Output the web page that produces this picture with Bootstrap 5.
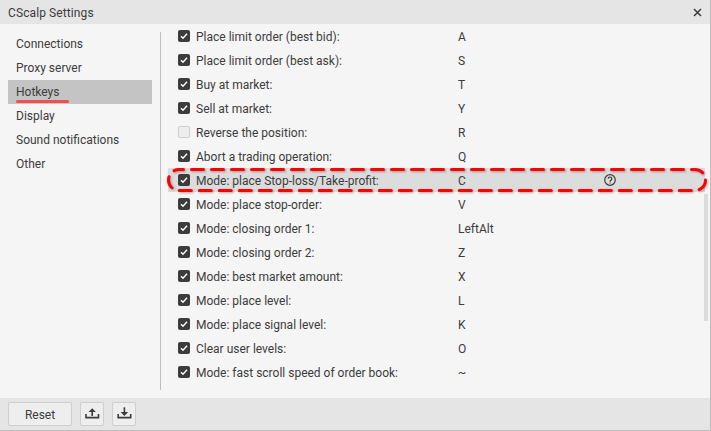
<!DOCTYPE html>
<html lang="en">
<head>
    <meta charset="UTF-8">
    <meta name="viewport" content="width=device-width, initial-scale=1.0">
    <title>CScalp Settings</title>
    <link href="https://cdn.jsdelivr.net/npm/bootstrap@5.3.0/dist/css/bootstrap.min.css" rel="stylesheet">
    <style>
        html, body { height: 100%; overflow: hidden; }
        body { background: #f5f5f5; color: #3c3c3c; font-family: Roboto, "Liberation Sans", sans-serif; font-size: 12px; }
        .settings-window { position: relative; width: 711px; height: 431px; border-right: 1px solid #bdbdbd; border-bottom: 1px solid #bdbdbd; }
        .title-bar { height: 24px; background: #e5e5e5; padding: 1px 8px 0; font-size: 12px; letter-spacing: .1px; }
        .close-btn { width: 9px; height: 9px; display: block; color: #3c3c3c; }
        .settings-body { height: 374px; }
        .side-menu { width: 160px; padding: 8px 8px 0; }
        .side-item { height: 24px; padding-left: 8px; line-height: 24px; position: relative; }
        .side-item.is-active { background: #c4c4c4; }
        .side-underline { position: absolute; left: 8px; top: 19.500px; width: 53px; height: 3.500px; border-radius: 2px; background: #f05050; }
        .hotkeys-pane { border-left: 1px solid #bdbdbd; margin: 8px 0; position: relative; }
        .hotkey-list { margin-top: -8px; padding-left: 7px; }
        .hotkey-row { height: 24px; padding-left: 10px; }
        .hotkey-row.is-marked { background: #dcdcdc; margin-right: 5px; }
        .hotkey-check { width: 12px; height: 12px; border-radius: 2px; background: #3c3c3c; margin-right: 6px; flex: none; display: flex; align-items: center; justify-content: center; }
        .hotkey-check.is-off { background: #eeeeee; border: 1px solid #cfcfcf; }
        .hotkey-check svg { width: 8px; height: 8px; }
        .hotkey-name { width: 262px; padding-top: 2px; }
        .hotkey-key { width: 146px; padding-top: 2px; }
        .help-icon { width: 12px; height: 12px; display: block; }
        .scroll-thumb { position: absolute; left: 543px; top: 162px; width: 4px; height: 127px; background: #dcdcdc; }
        .footer-bar { height: 32px; background: #e5e5e5; padding: 0 8px; gap: 8px; }
        .footer-btn { height: 24px; border: 1px solid #cfcfcf; border-radius: 2px; background: #eeeeee; color: #3c3c3c; font-size: 12px; padding: 0; }
        .footer-btn.is-wide { width: 64px; padding-top: 1px; }
        .footer-btn.is-icon { width: 24px; }
        .footer-btn svg { width: 16px; height: 16px; }
        .mark-oval { position: absolute; left: 165px; top: 167px; width: 544px; height: 26px; filter: drop-shadow(1px 1px 1px rgba(0, 0, 0, .3)); }
    </style>
</head>
<body>

    <div class="settings-window d-flex flex-column">
        <div class="title-bar d-flex align-items-center justify-content-between">
            <span>CScalp Settings</span>
            <svg class="close-btn" viewBox="0 0 9 9"><path d="M1 1l7 7M8 1L1 8" stroke="currentColor" stroke-width="1.5" fill="none"/></svg>
        </div>

        <div class="settings-body d-flex">
            <div class="side-menu flex-shrink-0">
                <div class="side-item">Connections</div>
                <div class="side-item">Proxy server</div>
                <div class="side-item is-active">Hotkeys<span class="side-underline"></span></div>
                <div class="side-item">Display</div>
                <div class="side-item">Sound notifications</div>
                <div class="side-item">Other</div>
            </div>

            <div class="hotkeys-pane flex-grow-1">
                <div class="hotkey-list" id="hotkeyList"></div>
                <div class="scroll-thumb"></div>
            </div>
        </div>

        <div class="footer-bar d-flex align-items-center">
            <button type="button" class="btn footer-btn is-wide">Reset</button>
            <button type="button" class="btn footer-btn is-icon d-flex align-items-center justify-content-center">
                <svg viewBox="0 0 16 16" fill="none" stroke="#3c3c3c" stroke-width="1.600"><path d="M8.200 10V5"/><path d="M8.200 2.200L4.600 6h7.200z" fill="#3c3c3c" stroke="none"/><path d="M2 8v3.600h12.500V8"/></svg>
            </button>
            <button type="button" class="btn footer-btn is-icon d-flex align-items-center justify-content-center">
                <svg viewBox="0 0 16 16" fill="none" stroke="#3c3c3c" stroke-width="1.600"><path d="M8.400 1.300V7"/><path d="M8.400 10L4.600 6h7.600z" fill="#3c3c3c" stroke="none"/><path d="M2.200 8v3.600h12.500V8"/></svg>
            </button>
        </div>

        <svg class="mark-oval" viewBox="0 0 544 26" fill="none">
            <rect x="3.500" y="2.500" width="537" height="21" rx="10.500" stroke="#ff0000" stroke-width="3" stroke-dasharray="12 8" stroke-dashoffset="7.500" stroke-linecap="round"/>
        </svg>
    </div>

    <script>
        const hotkeys = [
            ['Place limit order (best bid):', 'A', 1],
            ['Place limit order (best ask):', 'S', 1],
            ['Buy at market:', 'T', 1],
            ['Sell at market:', 'Y', 1],
            ['Reverse the position:', 'R', 0],
            ['Abort a trading operation:', 'Q', 1],
            ['Mode: place Stop-loss/Take-profit:', 'C', 1, true],
            ['Mode: place stop-order:', 'V', 1],
            ['Mode: closing order 1:', 'LeftAlt', 1],
            ['Mode: closing order 2:', 'Z', 1],
            ['Mode: best market amount:', 'X', 1],
            ['Mode: place level:', 'L', 1],
            ['Mode: place signal level:', 'K', 1],
            ['Clear user levels:', 'O', 1],
            ['Mode: fast scroll speed of order book:', '~', 1]
        ];
        const tick = '<svg viewBox="0 0 8 8" fill="none" stroke="#fff" stroke-width="1.4"><path d="M1 4.200l2 2 4-4.400"/></svg>';
        const help = '<svg class="help-icon" viewBox="0 0 12 12" fill="none" stroke="#3c3c3c" stroke-width="1.200"><circle cx="6" cy="6" r="5.300"/><path d="M4.200 4.800a1.800 1.800 0 1 1 2.800 1.500c-.7.500-1 .8-1 1.400"/><path d="M6 8.500v1.100"/></svg>';
        document.getElementById('hotkeyList').innerHTML = hotkeys.map(function (h) {
            return '<div class="hotkey-row d-flex align-items-center' + (h[3] ? ' is-marked' : '') + '">' +
                '<span class="hotkey-check' + (h[2] ? '' : ' is-off') + '">' + (h[2] ? tick : '') + '</span>' +
                '<span class="hotkey-name">' + h[0] + '</span>' +
                '<span class="hotkey-key">' + h[1] + '</span>' +
                (h[3] ? help : '') +
                '</div>';
        }).join('');
    </script>
    <script src="https://cdn.jsdelivr.net/npm/bootstrap@5.3.0/dist/js/bootstrap.bundle.min.js"></script>
</body>
</html>
